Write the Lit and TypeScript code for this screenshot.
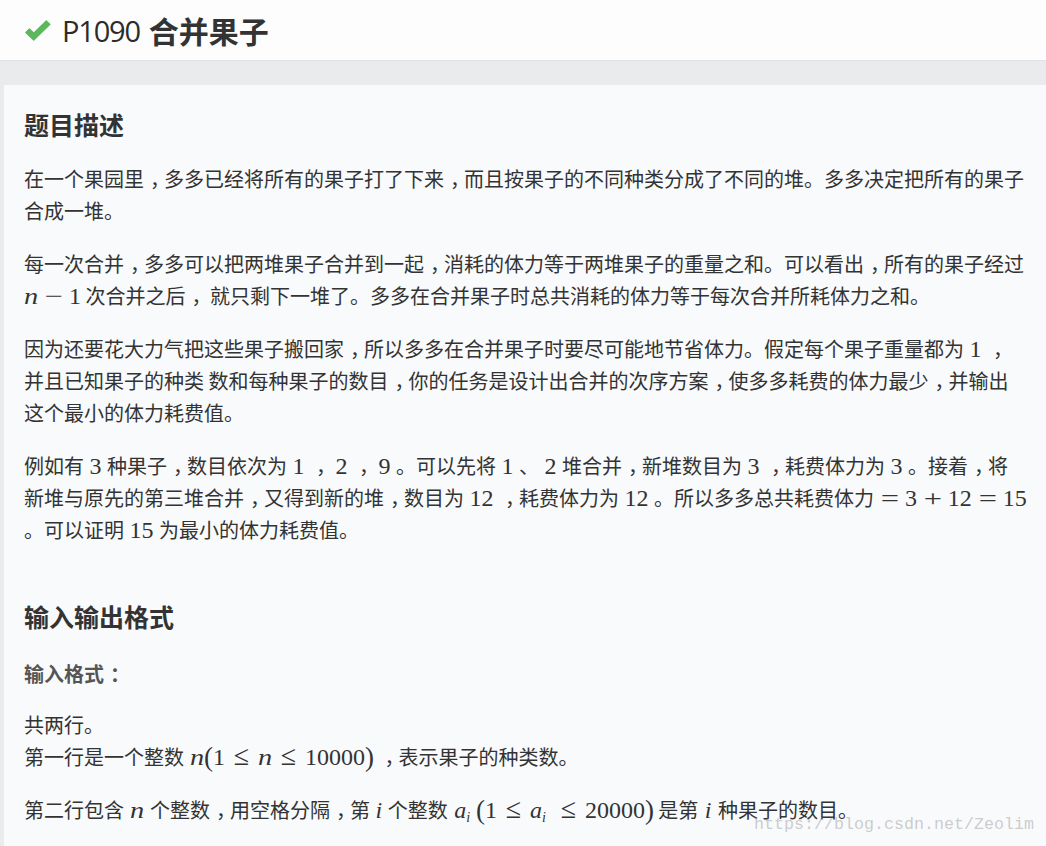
import { LitElement, html, css } from "lit";
import { customElement } from "lit/decorators.js";

const t = (s: string) =>
  s.split(/([，：])/).map((x) => (x === "，" || x === "：" ? html`<span class="pc">${x}</span>` : x));
const m = (s: string) => html`<span class="m">${s}</span>`;
const d = (s: string) => html`<span class="m tight">${s}</span>`;
const wide = html`<span class="wide">n</span>`;
const v = (s: string) => html`<span class="m v">${s}</span>`;
const op = (s: string) => html`<span class="m op">${s}</span>`;
const le = html`<span class="m le">≤</span>`;
const paren = (s: string) => html`<span class="m tight paren">${s}</span>`;
const ai = html`<span class="m v tight">a</span><span class="sub">i</span>`;

@customElement("app-root")
export class AppRoot extends LitElement {
  static styles = css`
    :host {
      display: block;
      width: 1046px;
      height: 846px;
      overflow: hidden;
      position: relative;
      background: #e9ebed;
      color: #333;
      font-family: "Noto Sans CJK SC", "Open Sans", sans-serif;
    }
    .head {
      height: 61px;
      box-sizing: border-box;
      background: #fdfdfd;
      border-bottom: 1px solid #e0e3e5;
      margin-bottom: 24px;
      padding-left: 25px;
      display: flex;
      align-items: center;
    }
    .check { width: 26px; height: 21px; margin-right: 11px; flex: none; }
    .pid { font-family: "Open Sans", sans-serif; font-size: 29px; letter-spacing: -1.2px; margin-right: 9px; color: #2b2b2b; }
    .title { font-size: 30px; font-weight: 700; }
    .card {
      margin-left: 4px;
      background: #f9fafb;
      padding: 17px 20px 0;
      height: 761px;
      box-sizing: border-box;
    }
    h2 {
      margin: 0;
      font-size: 25px;
      line-height: 44px;
      font-weight: 700;
    }
    h2.second { margin-top: 48px; }
    h3 {
      margin: 21px 0 0;
      font-size: 20px;
      line-height: 30px;
      font-weight: 700;
      color: #555;
    }
    p {
      margin: 21px 0 0;
      font-size: 20px;
      line-height: 32px;
      white-space: nowrap;
    }
    p.first { margin-top: 17px; }
    p.after { margin-top: 20px; }
    .pc { padding-left: 0.3em; letter-spacing: -0.3em; }
    .m { font-family: "Liberation Serif", serif; font-size: 24px; line-height: 0; margin: 0 5.5px; }
    .v { font-style: italic; }
    .v2 { margin: 0 6.5px; }
    .wide {
      display: inline-block;
      width: 14px;
      line-height: 0;
      font-family: "Liberation Serif", serif;
      font-style: italic;
      font-size: 24px;
      transform: scaleX(1.18);
      transform-origin: left;
    }
    .nv { margin-left: 6px; }
    .nvr { margin-right: 6px; }
    .op { display: inline-block; margin: 0 8.7px; transform: scaleX(1.35); }
    .le { font-size: 28px; margin: 0 8.8px; }
    .tight { margin: 0; }
    .paren { font-size: 27px; vertical-align: -1px; }
    .ain { margin-left: 2px; }
    .sub { font-family: "Liberation Serif", serif; font-style: italic; font-size: 14px; vertical-align: -4px; line-height: 0; margin-right: 6px; }
    .mark {
      position: absolute;
      left: 754px;
      top: 815px;
      font-family: "Liberation Mono", monospace;
      font-size: 16.67px;
      line-height: 20px;
      color: rgba(130, 130, 130, 0.4);
    }
  `;

  render() {
    return html`
      <div class="head">
        <svg class="check" viewBox="1 0.5 24.4 20.2" preserveAspectRatio="none" aria-hidden="true">
          <polygon fill="#5cb85c" stroke="#5cb85c" stroke-width="1.2" stroke-linejoin="round" points="5.2,9.1 9.2,13.1 21,1.3 24.4,4.7 9.2,19.9 1.8,12.5"></polygon>
        </svg>
        <span class="pid">P1090</span><span class="title">合并果子</span>
      </div>
      <div class="card">
        <h2>题目描述</h2>
        <p class="first">${t("在一个果园里，多多已经将所有的果子打了下来，而且按果子的不同种类分成了不同的堆。多多决定把所有的果子")}<br />合成一堆。</p>
        <p>${t("每一次合并，多多可以把两堆果子合并到一起，消耗的体力等于两堆果子的重量之和。可以看出，所有的果子经过")}<br />
          ${wide}${op("−")}${d("1")} ${t("次合并之后， 就只剩下一堆了。多多在合并果子时总共消耗的体力等于每次合并所耗体力之和。")}</p>
        <p>${t("因为还要花大力气把这些果子搬回家，所以多多在合并果子时要尽可能地节省体力。假定每个果子重量都为")}${m("1")}${t("，")}<br />
          ${t("并且已知果子的种类 数和每种果子的数目，你的任务是设计出合并的次序方案，使多多耗费的体力最少，并输出")}<br />
          ${t("这个最小的体力耗费值。")}</p>
        <p>例如有${m("3")}${t("种果子，数目依次为")}${m("1")}${t("，")}${m("2")}${t("，")}${m("9")}。可以先将${m("1")}、${m("2")}${t("堆合并，新堆数目为")}${m("3")}${t("，耗费体力为")}${m("3")}${t("。接着，将")}<br />
          ${t("新堆与原先的第三堆合并，又得到新的堆，数目为")}${m("12")}${t("，耗费体力为")}${m("12")}。所以多多总共耗费体力${op("=")}${d("3")}${op("+")}${d("12")}${op("=")}${d("15")}<br />
          。可以证明${m("15")}为最小的体力耗费值。</p>
        <h2 class="second">输入输出格式</h2>
        <h3>${t("输入格式：")}</h3>
        <p class="after">共两行。<br />第一行是一个整数<span class="wide nv">n</span>${paren("(")}${d("1")}${le}${wide}${le}${d("10000")}${paren(")")} ${t("，表示果子的种类数。")}</p>
        <p>${t("第二行包含")}<span class="wide nv nvr">n</span>${t("个整数，用空格分隔，第")}${v("i")}${t("个整数")} <span class="ain"></span>${ai}${paren("(")}${d("1")}${le}${ai}${le}${d("20000")}${paren(")")} 是第<span class="m v v2">i</span>种果子的数目。</p>
      </div>
      <div class="mark">https://blog.csdn.net/Zeolim</div>
    `;
  }
}
